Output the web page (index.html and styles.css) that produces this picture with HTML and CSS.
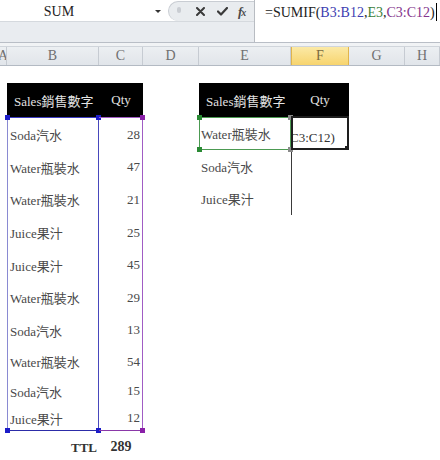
FILE: index.html
```html
<!DOCTYPE html>
<html>
<head>
<meta charset="utf-8">
<link rel="stylesheet" href="styles.css">
</head>
<body>
<div class="app">
  <div class="toolbar">
    <div class="tb-left">
      <div class="tb-row">
        <div class="namebox"><span class="name">SUM</span><span class="dd"></span></div>
        <div class="fbtns">
          <span class="grip"></span>
          <svg class="ic-x" width="9" height="9" viewBox="0 0 9 9"><path d="M1 1 L8 8 M8 1 L1 8" stroke="#3a3a3a" stroke-width="2" stroke-linecap="round"/></svg>
          <svg class="ic-ok" width="11" height="9" viewBox="0 0 11 9"><path d="M1 4.5 L4 7.5 L10 1" fill="none" stroke="#3a3a3a" stroke-width="2.2" stroke-linejoin="round" stroke-linecap="round"/></svg>
          <span class="fx">f<small>x</small></span>
        </div>
      </div>
      <div class="tb-strip"></div>
    </div>
    <div class="formula">=SUMIF(<span class="c-b">B3:B12</span>,<span class="c-g">E3</span>,<span class="c-p">C3:C12</span>)<span class="caret"></span></div>
  </div>
  <div class="gap-strip"></div>
  <div class="colheads">
    <div class="ch ch-a"><span>A</span></div>
    <div class="ch">B</div>
    <div class="ch">C</div>
    <div class="ch">D</div>
    <div class="ch">E</div>
    <div class="ch ch-active">F</div>
    <div class="ch">G</div>
    <div class="ch">H</div>
  </div>
  <div class="sheet">
    <div class="hdr hdr-b">Sales銷售數字</div>
    <div class="hdr hdr-c">Qty</div>
    <div class="hdr hdr-e">Sales銷售數字</div>
    <div class="hdr hdr-f">Qty</div>

    <div class="range range-b">
      <div class="cell">Soda汽水</div>
      <div class="cell">Water瓶裝水</div>
      <div class="cell">Water瓶裝水</div>
      <div class="cell">Juice果汁</div>
      <div class="cell">Juice果汁</div>
      <div class="cell">Water瓶裝水</div>
      <div class="cell">Soda汽水</div>
      <div class="cell">Water瓶裝水</div>
      <div class="cell">Soda汽水</div>
      <div class="cell">Juice果汁</div>
      <span class="hd hd-tl blue"></span>
      <span class="hd hd-tr blue"></span>
      <span class="hd hd-bl blue"></span>
      <span class="hd hd-br blue"></span>
    </div>
    <div class="range range-c">
      <div class="cell num">28</div>
      <div class="cell num">47</div>
      <div class="cell num">21</div>
      <div class="cell num">25</div>
      <div class="cell num">45</div>
      <div class="cell num">29</div>
      <div class="cell num">13</div>
      <div class="cell num">54</div>
      <div class="cell num">15</div>
      <div class="cell num">12</div>
      <span class="hd hd-tr purple"></span>
      <span class="hd hd-br purple"></span>
    </div>

    <div class="cell e3">Water瓶裝水
      <span class="hd hd-tl green"></span>
      <span class="hd hd-bl green"></span>
      <span class="hd hd-tr gray"></span>
      <span class="hd hd-br gray"></span>
    </div>
    <div class="cell e4">Soda汽水</div>
    <div class="cell e5">Juice果汁</div>

    <div class="active-cell"><span class="edit">C3:C12)</span><span class="fill"></span></div>
    <div class="edit-line"></div>

    <div class="ttl">TTL</div>
    <div class="ttl-sum">289</div>
  </div>
</div>
</body>
</html>
```

FILE: styles.css
```css
html, body {
  margin: 0;
  padding: 0;
  background: #ffffff;
}
.app {
  width: 440px;
  height: 460px;
  overflow: hidden;
  font-family: "Liberation Serif", "Noto Sans CJK TC", serif;
  color: #474747;
}
.toolbar {
  display: flex;
  height: 43px;
  border-bottom: 1px solid #b9bec6;
  box-sizing: border-box;
}
.tb-left {
  width: 254px;
  display: flex;
  flex-direction: column;
}
.tb-row {
  display: flex;
  height: 22px;
  background: #ffffff;
  border-bottom: 1px solid #d5d9de;
  box-sizing: border-box;
}
.namebox {
  width: 168px;
  display: flex;
  align-items: center;
}
.name {
  width: 118px;
  text-align: center;
  font-size: 14px;
  color: #222;
  padding-top: 2px;
}
.dd {
  margin-left: 37px;
  margin-top: 2px;
  width: 0;
  height: 0;
  border-left: 3px solid transparent;
  border-right: 3px solid transparent;
  border-top: 3px solid #333;
}
.fbtns {
  flex: 1;
  display: flex;
  align-items: center;
  background: #e9ecef;
  border: 1px solid #c9cdd3;
  border-right: none;
  border-bottom: none;
  border-radius: 11px 0 0 11px;
  box-sizing: border-box;
  padding-left: 8px;
  margin-top: 1px;
}
.grip {
  width: 4px;
  height: 6px;
  border-radius: 2px;
  background: #c9cdd2;
  margin-top: -3px;
}
.ic-x {
  margin-left: 15px;
}
.ic-ok {
  margin-left: 12px;
}
.fx {
  margin-left: 10px;
  font-style: italic;
  font-weight: bold;
  font-size: 13px;
  color: #4a4a4a;
  letter-spacing: -1px;
}
.fx small {
  font-size: 10px;
}
.tb-strip {
  flex: 1;
  background: #e9ecf0;
}
.formula {
  flex: 1;
  background: #fff;
  border-left: 1px solid #b8bcc2;
  padding-left: 10px;
  padding-top: 3px;
  font-size: 14px;
  line-height: 20px;
  color: #222;
  white-space: nowrap;
}
.c-b { color: #3c3cb0; }
.c-g { color: #3a803a; }
.c-p { color: #84348c; }
.caret {
  display: inline-block;
  width: 0;
  height: 18px;
  border-left: 1px solid #000;
  vertical-align: -4px;
  margin-left: 1px;
}
.gap-strip {
  height: 3px;
  background: #f1f3f5;
}
.colheads {
  display: grid;
  grid-template-columns: 7px 92px 44px 56px 92px 58px 56px 1fr;
  height: 20px;
  background: linear-gradient(#eceff2, #e1e5ea);
  border-top: 1px solid #d0d5db;
  border-bottom: 1px solid #b3bac3;
  box-sizing: border-box;
}
.ch {
  display: flex;
  align-items: center;
  justify-content: center;
  border-right: 1px solid #c6cbd2;
  font-size: 14px;
  color: #707070;
  overflow: hidden;
}
.ch-a {
  justify-content: flex-end;
}
.ch-a span {
  margin-right: -2px;
}
.ch-active {
  background: linear-gradient(#fbe9a6, #f7d46e);
  border-right-color: #e1b54c;
  border-left: 1px solid #e1b54c;
  color: #7a6a40;
}
.sheet {
  display: grid;
  grid-template-columns: 7px 92px 44px 56px 92px 58px 56px 1fr;
  grid-template-rows: 17px 34px repeat(7, 32.6px) 30px 29px 27px 30px;
}
.hdr {
  background: #000;
  color: #e2e2e2;
  font-size: 13px;
  display: flex;
  align-items: center;
  grid-row: 2;
}
.hdr-b { grid-column: 2; padding-left: 7px; }
.hdr-c { grid-column: 3; justify-content: center; }
.hdr-e { grid-column: 5; padding-left: 7px; }
.hdr-f { grid-column: 6; justify-content: center; }
.range {
  position: relative;
  display: grid;
  grid-template-rows: repeat(7, 32.6px) 30px 29px 1fr;
  grid-row: 3 / span 10;
  box-sizing: border-box;
}
.range-b {
  grid-column: 2;
  border-left: 1px solid #8a8ad2;
  border-right: 1px solid #4848bc;
  border-top: 1px solid #3c3cc0;
  border-bottom: 1px solid #2c2ca8;
}
.range-c {
  grid-column: 3;
  border-right: 1px solid #a05cc4;
  border-top: 1px solid #a05cc4;
  border-bottom: 1px solid #8a38a8;
}
.cell {
  font-size: 13px;
  display: flex;
  align-items: center;
  padding-left: 2px;
  padding-top: 1px;
  white-space: nowrap;
  color: #4a4a4a;
}
.num {
  justify-content: flex-end;
  padding-right: 2px;
  padding-left: 0;
}
.hd {
  position: absolute;
  width: 5px;
  height: 5px;
}
.hd-tl { left: -3px; top: -3px; }
.hd-tr { right: -3px; top: -3px; }
.hd-bl { left: -3px; bottom: -3px; }
.hd-br { right: -3px; bottom: -3px; }
.blue { background: #1c1cc8; }
.purple { background: #8a20a8; }
.green { background: #2a8a34; }
.gray { background: #8a8a8a; }
.e3 {
  grid-column: 5;
  grid-row: 3;
  position: relative;
  border: 1px solid #4c9a52;
  box-sizing: border-box;
  padding-left: 1px;
}
.e4 { grid-column: 5; grid-row: 4; }
.e5 { grid-column: 5; grid-row: 5; }
.active-cell {
  grid-column: 6;
  grid-row: 3;
  position: relative;
  margin-top: -1px;
  border: 2px solid #1e1e1e;
  background: #fff;
  box-sizing: border-box;
  overflow: hidden;
  display: flex;
  align-items: flex-end;
  padding-bottom: 2px;
}
.edit {
  font-size: 13px;
  color: #333;
  white-space: nowrap;
  margin-left: -3px;
}
.fill {
  position: absolute;
  right: -2px;
  bottom: -2px;
  width: 4px;
  height: 4px;
  background: #1e1e1e;
}
.edit-line {
  grid-column: 6;
  grid-row: 4 / span 3;
  align-self: start;
  height: 65px;
  border-left: 1px solid #3a3a3a;
}
.ttl {
  grid-column: 2;
  grid-row: 13;
  font-weight: bold;
  font-size: 13px;
  color: #333;
  display: flex;
  align-items: center;
  justify-content: flex-end;
  padding-right: 2px;
  padding-top: 3px;
}
.ttl-sum {
  grid-column: 3;
  grid-row: 13;
  font-weight: bold;
  font-size: 14px;
  color: #333;
  display: flex;
  align-items: center;
  justify-content: center;
  padding-top: 1px;
}
```
